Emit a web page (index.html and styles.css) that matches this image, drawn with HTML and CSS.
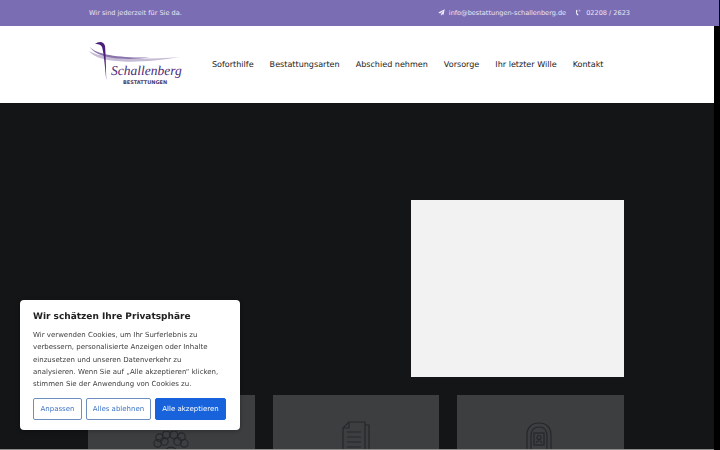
FILE: index.html
```html
<!DOCTYPE html>
<html lang="de">
<head>
  <meta charset="UTF-8">
  <title>Schallenberg Bestattungen</title>
  <link rel="stylesheet" href="styles.css">
</head>
<body>

  <!-- Topbar -->
  <div class="topbar">
    <span>Wir sind jederzeit für Sie da.</span>
    <div class="topbar-contact">
      <svg class="plane" viewBox="0 0 12 12"><path d="M11.5 .5 .5 6.200l3 1.500L9.500 3 5 8.400V11.500l2-2.400 2.400 1.200z"/></svg>
      <span>info@bestattungen-schallenberg.de</span>
      <svg class="phone" viewBox="0 0 12 12">
        <path d="M3.600 1.200 1.900 2.100C1.100 5.600 2 8.800 4.200 11l1.700-.7-1-2.700-1.100.3C3.200 6.700 3.100 5.500 3.400 4.400l1.100-.3z"/>
        <path class="waves" d="M6.500 1.500c1.400 0 2.400 1 2.400 2.400M6.500 3.300c.5 0 .8.300.8.800"/>
      </svg>
      <span>02208 / 2623</span>
    </div>
  </div>

  <div class="page">
    <!-- Header -->
    <header class="site-header">
      <svg class="logo" viewBox="0 0 94 44" role="img" aria-label="Schallenberg Bestattungen">
        <path class="logo-sweep" d="M1 10C14 18 50 19 92 16 52 23 10 23 1 10z"/>
        <path class="logo-sweep-dark" d="M2 6C8 14 34 17 62 16.500 34 20 8 17 2 6z"/>
        <path class="logo-ribbon" d="M7 3C11 -.5 16 .5 17 5 17.600 9 18 28 18.500 41 17.200 28 15.800 11 14 6 12.500 3 9.500 3 7 3z"/>
        <text class="logo-name" x="23" y="34">Schallenberg</text>
        <text class="logo-sub" x="35" y="42.500">BESTATTUNGEN</text>
      </svg>
      <nav class="nav">
        <a>Soforthilfe</a>
        <a>Bestattungsarten</a>
        <a>Abschied nehmen</a>
        <a>Vorsorge</a>
        <a>Ihr letzter Wille</a>
        <a>Kontakt</a>
      </nav>
    </header>

    <!-- Hero -->
    <main class="hero">
      <div class="hero-row">
        <div class="hero-box"></div>
      </div>
      <div class="cards">
        <div class="card">
          <svg class="card-icon icon-flower" viewBox="0 0 40 40">
            <circle cx="8" cy="7" r="4"/><circle cx="15" cy="4" r="4"/><circle cx="23" cy="4" r="4"/><circle cx="31" cy="6" r="4"/>
            <circle cx="6" cy="13" r="4"/><circle cx="13" cy="11" r="4"/><circle cx="27" cy="11" r="4"/><circle cx="34" cy="13" r="4"/>
            <circle cx="20" cy="24" r="7"/><circle cx="20" cy="24" r="3"/>
          </svg>
        </div>
        <div class="card">
          <svg class="card-icon icon-doc" viewBox="0 0 30 40">
            <path d="M8 1h16v38H2V7z"/><path d="M8 1v6H2"/><path d="M24 4h4v34"/>
            <path d="M6 11h14M6 16h14M6 21h14M6 26h14"/>
          </svg>
        </div>
        <div class="card">
          <svg class="card-icon icon-stone" viewBox="0 0 30 40">
            <path d="M2 39V13C2 5 7 1 14 1s12 4 12 12v26"/><path d="M6 39V14C6 8 9 5 14 5s8 3 8 9v25"/>
            <rect x="9" y="11" width="10" height="12"/><circle cx="14" cy="15.500" r="2"/><path d="M11 21c1-3 5-3 6 0"/>
          </svg>
        </div>
      </div>
    </main>
    <div class="page-end"></div>
  </div>

  <!-- Cookie banner -->
  <div class="cookie">
    <h2>Wir schätzen Ihre Privatsphäre</h2>
    <p>Wir verwenden Cookies, um Ihr Surferlebnis zu verbessern, personalisierte Anzeigen oder Inhalte einzusetzen und unseren Datenverkehr zu analysieren. Wenn Sie auf „Alle akzeptieren“ klicken, stimmen Sie der Anwendung von Cookies zu.</p>
    <div class="cookie-btns">
      <button class="btn-outline">Anpassen</button>
      <button class="btn-outline">Alles ablehnen</button>
      <button class="btn-primary">Alle akzeptieren</button>
    </div>
  </div>

</body>
</html>
```

FILE: styles.css
```css
html, body {
  margin: 0;
  height: 450px;
  overflow: hidden;
}

body {
  background: #000;
  font-family: "DejaVu Sans", sans-serif;
  text-rendering: geometricPrecision;
  display: flex;
  flex-direction: column;
}

/* topbar */
.topbar {
  width: 719px;
  height: 25.5px;
  flex: none;
  box-sizing: border-box;
  padding: 0 89px;
  background: #7a6db3;
  color: #e9e6f4;
  font-size: 6.55px;
  display: flex;
  align-items: center;
  justify-content: space-between;
}

.topbar-contact {
  display: flex;
  align-items: center;
}

.plane, .phone {
  width: 7px;
  height: 7px;
  fill: #f1eff8;
}

.plane { margin-right: 4px; }
.phone { margin: 0 4px 0 9px; }

.waves {
  fill: none;
  stroke: #f1eff8;
  stroke-width: 1;
}

.page {
  width: 713.5px;
  flex: 1;
  min-height: 0;
  display: flex;
  flex-direction: column;
}

/* header */
.site-header {
  height: 77.5px;
  flex: none;
  box-sizing: border-box;
  background: #fff;
  padding-left: 88px;
  display: flex;
  align-items: center;
}

.logo {
  width: 94px;
  height: 44px;
  margin-top: -2px;
  flex: none;
}

.logo-sweep { fill: #c5bcd6; }
.logo-sweep-dark { fill: #8a72ab; }
.logo-ribbon { fill: #4a1f78; }

.logo-name {
  font-family: "Liberation Serif", serif;
  font-style: italic;
  font-size: 13.5px;
  fill: #4a2a78;
}

.logo-sub {
  font-family: "DejaVu Sans", sans-serif;
  font-weight: bold;
  font-size: 5px;
  fill: #4a3a6a;
}

.nav {
  display: flex;
  gap: 16px;
  margin-left: 30px;
  font-size: 8.05px;
  color: #222;
}

/* hero */
.hero {
  flex: 1;
  min-height: 0;
  overflow: hidden;
  background: #131517;
  box-sizing: border-box;
  padding: 97px 90px 0 88px;
}

.hero-row {
  display: flex;
  justify-content: flex-end;
}

.hero-box {
  width: 213px;
  height: 177px;
  background: #f2f2f2;
}

.cards {
  display: grid;
  grid-template-columns: repeat(3, 1fr);
  gap: 18px;
  margin-top: 18px;
}

.card {
  height: 140px;
  background: #3d3e40;
  display: flex;
  justify-content: center;
}

.card-icon {
  fill: none;
  stroke: #26272b;
  stroke-width: 1.2;
  flex: none;
}

.icon-flower {
  width: 38px;
  height: 38px;
  margin-top: 36px;
}

.icon-doc {
  width: 30px;
  height: 40px;
  margin-top: 26px;
}

.icon-stone {
  width: 30px;
  height: 40px;
  margin-top: 27px;
}

.page-end {
  height: 1.5px;
  flex: none;
  background: #8b8c8b;
}

/* cookie banner */
.cookie {
  position: fixed;
  left: 20px;
  top: 300px;
  width: 220px;
  height: 130px;
  box-sizing: border-box;
  padding: 11px 13px 0;
  background: #fff;
  border-radius: 4px;
  box-shadow: 0 1px 4px rgba(0, 0, 0, .3);
}

.cookie h2 {
  margin: 0;
  font-size: 9px;
  line-height: 12px;
  color: #212121;
}

.cookie p {
  margin: 6px 5px 0 0;
  font-size: 7px;
  line-height: 12.3px;
  color: #3c3c3c;
}

.cookie-btns {
  display: flex;
  gap: 4px;
  margin-top: 7.5px;
}

.cookie-btns button {
  height: 22px;
  box-sizing: border-box;
  padding: 0;
  border-radius: 2px;
  font-family: inherit;
  font-size: 7px;
}

.btn-outline {
  background: #fff;
  border: 1.5px solid #6d8fbd;
  color: #3f74c4;
}

.btn-outline:nth-child(1) { width: 49px; }
.btn-outline:nth-child(2) { width: 65px; }

.btn-primary {
  width: 71px;
  background: #1863dc;
  border: 1px solid #1863dc;
  color: #fff;
}
```
